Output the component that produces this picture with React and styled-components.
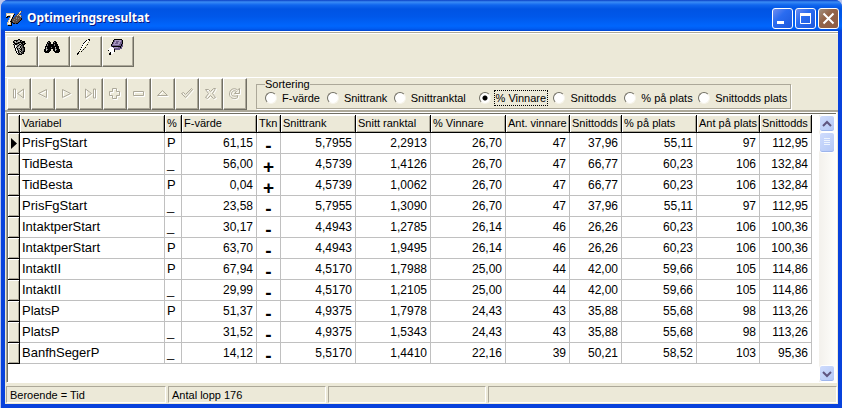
import React, { useState } from "react";
import styled, { createGlobalStyle, css } from "styled-components";

const FACE = "#ece9d8";
const SHADOW = "#aca899";
const DARK = "#716f64";

const GlobalStyle = createGlobalStyle`
  * { box-sizing: border-box; }
  body {
    margin: 0;
    background: #b9c6ee;
    color: #000;
    font: 11px/14px "Liberation Sans", Arial, sans-serif;
  }
  button, input { font: inherit; color: inherit; margin: 0; padding: 0; }
`;

const Window = styled.main`
  display: flex;
  flex-direction: column;
  min-height: 100vh;
  margin-left: 1px;
  padding: 0 4px 4px;
  background: #0842dc;
  border-radius: 7px 7px 0 0;
  overflow: hidden;
`;

const TitleBar = styled.header`
  display: flex;
  align-items: center;
  height: 31px;
  margin: 0 -4px;
  padding: 5px 3px 0 5px;
  background: linear-gradient(#0a3fc4, #3a8cf5 2px, #1066ee 5px, #0054e3 9px, #0058ea 17px, #0066fd 26px, #005bf0 29px, #0043cf);
`;

const Title = styled.h1`
  flex: 1;
  margin: 0 0 0 4px;
  color: #fff;
  font: bold 12px/18px "Noto Sans", "Open Sans", sans-serif;
  text-shadow: 1px 1px #0a1883;
`;

const Caption = styled.button`
  width: 21px;
  height: 21px;
  margin-left: 2px;
  border: 1px solid #fff;
  border-radius: 3px;
  background: ${(p) => (p.$close ? "linear-gradient(135deg, #a09080, #946448 40%, #8c5c44)" : "linear-gradient(135deg, #6f8df0, #2a6cf0 40%, #1c58dc)")};
  svg { display: block; }
`;

const Body = styled.div`
  flex: 1;
  display: flex;
  flex-direction: column;
  background: ${FACE};
  border-top: 1px solid #fff;
  box-shadow: inset 0 1px ${SHADOW}, inset 0 2px #fff;
`;

const ToolBar = styled.div`
  display: flex;
  padding: 4px 1px 0;
`;

const raised = css`
  border: 1px solid;
  border-color: #fff ${DARK} ${DARK} #fff;
  box-shadow: inset -1px -1px ${SHADOW};
  background: ${FACE};
`;

const ToolButton = styled.button`
  ${raised}
  display: flex;
  align-items: flex-start;
  width: 32px;
  height: 31px;
  padding: 2px 0 0 5px;
`;

const Panel = styled.div`
  display: flex;
  margin-top: 10px;
  padding-left: 2px;
  border-top: 1px solid #fff;
  border-bottom: 2px solid ${SHADOW};
  height: 35px;
`;

const NavButton = styled.button`
  ${raised}
  width: 24px;
  height: 32px;
  svg { display: block; margin: 0 auto; }
`;

const Sorting = styled.fieldset`
  flex: 0 1 535px;
  min-width: 0;
  height: 31px;
  margin: 0 0 0 9px;
  padding: 0 0 0 8px;
  border: 1px solid ${SHADOW};
  box-shadow: 1px 1px #fff;
`;

const Legend = styled.legend`
  margin: 0;
  padding: 0;
  line-height: 12px;
`;

const Options = styled.div`
  display: grid;
  grid-template-columns: 62fr 67fr 85fr 75fr 71fr 74fr 92fr;
  padding-top: 1px;
`;

const Option = styled.label`
  display: flex;
  align-items: center;
  gap: 4px;
  white-space: nowrap;
  span { padding: 0 1px; outline: ${(p) => (p.$focused ? "1px dotted #000" : "none")}; }
`;

const Radio = styled.input`
  appearance: none;
  flex: none;
  width: 12px;
  height: 12px;
  border: 1px solid;
  border-color: ${DARK} #f6f4ea #f6f4ea ${DARK};
  border-radius: 50%;
  background: #fff;
  &:checked { background: radial-gradient(circle, #000 2px, #fff 3px); }
`;

const GridFrame = styled.div`
  flex: 1;
  display: flex;
  margin: 0 1px;
  background: #fff;
  border: 1px solid;
  border-color: #fff #fff #fff ${SHADOW};
  box-shadow: inset 1px 1px ${DARK};
  padding: 2px 0 0 1px;
`;

const GridArea = styled.div`
  flex: 1;
  min-width: 0;
  overflow: hidden;
`;

const Table = styled.table`
  table-layout: fixed;
  width: 804px;
  border-collapse: separate;
  border-spacing: 0;
`;

const Col = styled.col`
  width: ${(p) => p.$w}px;
`;

const Th = styled.th`
  height: 18px;
  padding: 0 0 1px 2px;
  overflow: hidden;
  border-right: 1px solid #000;
  border-bottom: 1px solid #000;
  background: ${FACE};
  box-shadow: inset 1px 1px #fff, inset -1px -1px ${SHADOW};
  font-weight: normal;
  line-height: 14px;
  text-align: left;
  white-space: nowrap;
`;

const Td = styled.td`
  height: 21px;
  padding: 0 3px 0 2px;
  overflow: hidden;
  border-right: 1px solid #c0c0c0;
  border-bottom: 1px solid #c0c0c0;
  font-size: ${(p) => (p.$text ? 13 : 12)}px;
  line-height: 18px;
  text-align: ${(p) => (p.$text ? "left" : "right")};
  white-space: nowrap;
`;

const SignCell = styled(Td)`
  padding: 6px 0 0;
  overflow: visible;
  font-size: 19px;
  font-weight: bold;
  line-height: 14px;
  text-align: center;
`;

const Indicator = styled.td`
  height: 21px;
  padding: 0 0 0 3px;
  border-right: 1px solid #000;
  border-bottom: 1px solid #000;
  background: ${FACE};
  box-shadow: inset 1px 1px #fff, inset -1px -1px ${SHADOW};
  svg { display: block; }
`;

const ScrollBar = styled.div`
  display: flex;
  flex-direction: column;
  width: 17px;
  background: linear-gradient(90deg, #f3f1ec, #fefefb);
`;

const ScrollButton = styled.button`
  width: 16px;
  height: 17px;
  border: 1px solid #fff;
  border-radius: 3px;
  background: linear-gradient(135deg, #cfdcfd, #b4c8f6);
  box-shadow: inset 0 -1px #9db5ec;
  svg { display: block; margin: 0 auto; }
`;

const Thumb = styled(ScrollButton).attrs({ as: "div" })`
  height: 21px;
  margin-bottom: auto;
  padding-top: 5px;
`;

const StatusBar = styled.footer`
  display: flex;
  gap: 2px;
  margin-top: 3px;
  padding: 0 1px 1px;
`;

const StatusPanel = styled.div`
  flex: ${(p) => (p.$w ? `0 0 ${p.$w}px` : "1")};
  height: 17px;
  padding: 1px 3px;
  border: 1px solid;
  border-color: ${SHADOW} #fff #fff ${SHADOW};
`;

/* Pixel drawings: each character picks a colour, a dot leaves the pixel clear. */
const PALETTE = { k: "#000", d: "#444", g: "#808080", s: "#c4c4bc", w: "#fff", y: "#f8f4d0", p: "#6d5c8c", l: "#a898c0", b: "#5a4a42", t: "#d8c4a0" };

function Pixels({ rows }) {
  const dots = [];
  rows.forEach((row, y) =>
    [...row].forEach((c, x) => {
      if (PALETTE[c]) dots.push(<rect key={`${x}-${y}`} x={x} y={y} width="1" height="1" fill={PALETTE[c]} />);
    })
  );
  return (
    <svg width={rows[0].length} height={rows.length} shapeRendering="crispEdges" aria-hidden="true">
      {dots}
    </svg>
  );
}

const APP = [
  "..............tb.",
  ".............tt..",
  "tttttttt....btb..",
  "twwwwwwtk..btb...",
  "twtttwwk..btbtt..",
  "tkkktwtk.bbbbbtb.",
  "kk..twk.bbgbbbb..",
  "...twtkbbbgbgbbk.",
  "...twkbbgbbbbbbk.",
  "..twtkbbbbgbbbk..",
  "..twkkbgbbbbbk...",
  ".ttwtkkbbbbbk....",
  ".twwtk.kkbkk.....",
  ".ttttk...........",
  "..kkkk...........",
];
const TRASH = [
  "......kk.......",
  "..kkkkggkk.....",
  ".kgskgsskgkkk..",
  ".kksggkkkkkkk..",
  "..kkkkkgskkgkk.",
  ".kgkkgskkgkkk..",
  "..kwsgkgskdk...",
  "..kwskgskgdk...",
  "..kwkgsskgdkk..",
  "...kskgkskgdk..",
  "...kwkgskkgdk..",
  "...kwskgskgdk..",
  "....kskgkgdkk..",
  "....kwkgskdk...",
  ".....kgkgdkk...",
  "......kkkk.....",
];
const BINOCULARS = [
  "................",
  "................",
  "....kk....kk....",
  "...kgkk..kgkk...",
  "...kkkk..kkkk...",
  "..kgkkkkkkgkkk..",
  "..kgkkkkkkgkkk..",
  ".kkkkkkkkkkkkkk.",
  ".kskkkkgkkkskkk.",
  ".kgkkkkkkkkgkkk.",
  "kksgkkk..kksgkkk",
  "kkskkkk..kkskkkk",
  "kkkkkk....kkkkkk",
  ".kkkk......kkkk.",
];
const FEATHER = [
  "............kk",
  "..........kwwk",
  ".........kwwy.",
  "........kwwyg.",
  ".......kwwyy..",
  ".......wwyyk..",
  "......kwwyg...",
  "......wwyy....",
  ".....kwyyk....",
  ".....wwyg.....",
  "....kwyk......",
  "....wyg.......",
  "...kyk........",
  "..k...........",
  ".kk...........",
  ".k............",
];
const ERASER = [
  "......kkkkkkkk..",
  ".....kpllllllpk.",
  ".....kplpppllpk.",
  "....kpllppllppk.",
  "....kplpppllppk.",
  "...kpllllllppkp.",
  "...kpppppppppkp.",
  "...pkkkkkkkkkpp.",
  "..wwwpllllppkp..",
  ".wwwwwpppppppp..",
  "wwwwwwkppppp....",
  "kwwwwwk.........",
  "..wwwwk.........",
  "..kwww..........",
  ".kkww...........",
  ".kk.............",
];

const TOOLS = [
  ["Rensa", TRASH],
  ["Sök", BINOCULARS],
  ["Redigera", FEATHER],
  ["Sudda", ERASER],
];

const NAV = [
  ["Första", "M1.5 2V11H3.5V2ZM11.5 2V11L5.5 6.5Z"],
  ["Föregående", "M10.5 2.5V10.5L2.5 6.5Z"],
  ["Nästa", "M2.5 2.5V10.5L10.5 6.5Z"],
  ["Sista", "M1.5 2V11L7.5 6.5ZM9.5 2V11H11.5V2Z"],
  ["Lägg till", "M4.5 1.5H8.5V4.5H11.5V8.5H8.5V11.5H4.5V8.5H1.5V4.5H4.5Z"],
  ["Ta bort", "M1.5 4.5H11.5V8.5H1.5Z"],
  ["Ändra", "M6.5 3.5L11.5 8.5H1.5Z"],
  ["Spara", "M1.5 6.5L3.5 5.5L5.5 7.5L11.5 1.5L12.5 2.5L5.5 10.5Z"],
  ["Avbryt", "M1.5 2.5H4.5L6.5 4.5L9.5 1.5H11.5L8.5 6.5L11.5 10.5L9.5 11.5L6.5 8.5L3.5 11.5L1.5 10.5L4.5 6.5Z"],
  ["Uppdatera", "M11.5 1.5V6.5H6.5L8.5 4.5C5 2.5 3.5 5 3.5 7C3.5 9 7 10 9.5 8.5V10.5C6 13 1.5 11 1.5 7C1.5 2.5 6 0 9.5 3Z"],
];

function NavIcon({ d }) {
  return (
    <svg width="14" height="14" fill="none" aria-hidden="true">
      <path d={d} stroke="#fff" transform="translate(1 1)" />
      <path d={d} stroke={SHADOW} />
    </svg>
  );
}

const SORTS = ["F-värde", "Snittrank", "Snittranktal", "% Vinnare", "Snittodds", "% på plats", "Snittodds plats"];

const COLUMNS = [
  ["Variabel", 145],
  ["%", 17],
  ["F-värde", 75],
  ["Tkn", 24],
  ["Snittrank", 75],
  ["Snitt ranktal", 75],
  ["% Vinnare", 75],
  ["Ant. vinnare", 64],
  ["Snittodds", 52],
  ["% på plats", 75],
  ["Ant på plats", 63],
  ["Snittodds", 52],
];

const ROWS = [
  ["PrisFgStart", "P", "61,15", "-", "5,7955", "2,2913", "26,70", "47", "37,96", "55,11", "97", "112,95"],
  ["TidBesta", "_", "56,00", "+", "4,5739", "1,4126", "26,70", "47", "66,77", "60,23", "106", "132,84"],
  ["TidBesta", "P", "0,04", "+", "4,5739", "1,0062", "26,70", "47", "66,77", "60,23", "106", "132,84"],
  ["PrisFgStart", "_", "23,58", "-", "5,7955", "1,3090", "26,70", "47", "37,96", "55,11", "97", "112,95"],
  ["IntaktperStart", "_", "30,17", "-", "4,4943", "1,2785", "26,14", "46", "26,26", "60,23", "106", "100,36"],
  ["IntaktperStart", "P", "63,70", "-", "4,4943", "1,9495", "26,14", "46", "26,26", "60,23", "106", "100,36"],
  ["IntaktII", "P", "67,94", "-", "4,5170", "1,7988", "25,00", "44", "42,00", "59,66", "105", "114,86"],
  ["IntaktII", "_", "29,99", "-", "4,5170", "1,2105", "25,00", "44", "42,00", "59,66", "105", "114,86"],
  ["PlatsP", "P", "51,37", "-", "4,9375", "1,7978", "24,43", "43", "35,88", "55,68", "98", "113,26"],
  ["PlatsP", "_", "31,52", "-", "4,9375", "1,5343", "24,43", "43", "35,88", "55,68", "98", "113,26"],
  ["BanfhSegerP", "_", "14,12", "-", "5,5170", "1,4410", "22,16", "39", "50,21", "58,52", "103", "95,36"],
];

function Cell({ value, index }) {
  if (index === 3) return <SignCell>{value}</SignCell>;
  return <Td $text={index < 2}>{value}</Td>;
}

function Chevron({ up }) {
  return (
    <svg width="12" height="10" fill="none" stroke="#5f5580" strokeWidth="2" aria-hidden="true">
      <path d={up ? "M2 7L6 3L10 7" : "M2 3L6 7L10 3"} />
    </svg>
  );
}

export default function App() {
  const [sort, setSort] = useState("% Vinnare");
  return (
    <>
      <GlobalStyle />
      <Window>
        <TitleBar>
          <Pixels rows={APP} />
          <Title>Optimeringsresultat</Title>
          <Caption aria-label="Minimera">
            <svg width="19" height="19"><path d="M4 12H11V15H4Z" fill="#fff" /></svg>
          </Caption>
          <Caption aria-label="Maximera">
            <svg width="19" height="19" fill="none" stroke="#fff"><path d="M4.5 5.5H14.5V14.5H4.5Z" /><path d="M4 5.5H15" strokeWidth="3" /></svg>
          </Caption>
          <Caption $close aria-label="Stäng">
            <svg width="19" height="19" stroke="#fff" strokeWidth="2"><path d="M4.5 4.5L14.5 14.5M14.5 4.5L4.5 14.5" /></svg>
          </Caption>
        </TitleBar>
        <Body>
          <ToolBar>
            {TOOLS.map(([name, rows]) => (
              <ToolButton key={name} aria-label={name}><Pixels rows={rows} /></ToolButton>
            ))}
          </ToolBar>
          <Panel>
            {NAV.map(([name, d]) => (
              <NavButton key={name} aria-label={name}><NavIcon d={d} /></NavButton>
            ))}
            <Sorting>
              <Legend>Sortering</Legend>
              <Options>
                {SORTS.map((name) => (
                  <Option key={name} $focused={name === sort}>
                    <Radio type="radio" name="sort" checked={name === sort} onChange={() => setSort(name)} />
                    <span>{name}</span>
                  </Option>
                ))}
              </Options>
            </Sorting>
          </Panel>
          <GridFrame>
            <GridArea>
              <Table>
                <colgroup>
                  <Col $w={12} />
                  {COLUMNS.map(([, w], i) => <Col key={i} $w={w} />)}
                </colgroup>
                <thead>
                  <tr>
                    <Th />
                    {COLUMNS.map(([name], i) => <Th key={i}>{name}</Th>)}
                  </tr>
                </thead>
                <tbody>
                  {ROWS.map((row, r) => (
                    <tr key={r}>
                      <Indicator>
                        {r === 0 && <svg width="6" height="11" aria-hidden="true"><path d="M0 0L6 5.5L0 11Z" /></svg>}
                      </Indicator>
                      {row.map((value, i) => <Cell key={i} value={value} index={i} />)}
                    </tr>
                  ))}
                </tbody>
              </Table>
            </GridArea>
            <ScrollBar>
              <ScrollButton aria-label="Rulla upp"><Chevron up /></ScrollButton>
              <Thumb>
                <svg width="8" height="8" stroke="#eef4fe" shapeRendering="crispEdges" aria-hidden="true"><path d="M1 0.5H7M1 2.5H7M1 4.5H7M1 6.5H7" /></svg>
              </Thumb>
              <ScrollButton aria-label="Rulla ner"><Chevron /></ScrollButton>
            </ScrollBar>
          </GridFrame>
          <StatusBar>
            <StatusPanel $w={160}>Beroende = Tid</StatusPanel>
            <StatusPanel $w={158}>Antal lopp 176</StatusPanel>
            <StatusPanel $w={158} />
            <StatusPanel />
          </StatusBar>
        </Body>
      </Window>
    </>
  );
}
